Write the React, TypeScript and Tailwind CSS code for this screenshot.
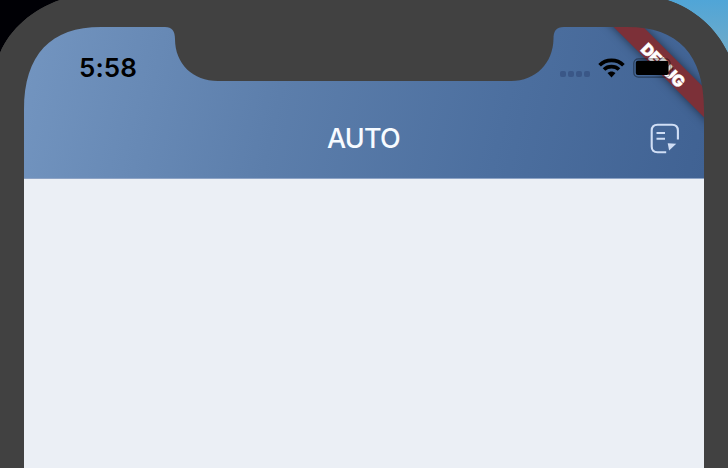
function PhoneFrame() {
  return (
    <svg className="pointer-events-none absolute inset-0" width="728" height="468" viewBox="0 0 728 468" aria-hidden="true">
      <defs>
        <linearGradient id="sky" x1="0" y1="0" x2="0" y2="1">
          <stop offset="0" stopColor="#50a5d7" />
          <stop offset="1" stopColor="#70abc9" />
        </linearGradient>
      </defs>
      <path d="M0 0H60C33 9 10 29 0 53Z" fill="#000005" />
      <path d="M667 0H728V53C716 28 695 9 667 0Z" fill="url(#sky)" />
      <path
        fillRule="evenodd"
        fill="#414141"
        d="M60 0H667C695 9 716 28 728 53V468H0V53C10 29 33 9 60 0Z M24 468V110C24 54 51 27 101 27H165C172 27 175 31 175 39C175 64 193 81 218 81H511C536 81 553 63 553.500 39C553.500 31 556 27 564 27H627C678 27 704 54 704 110V468Z"
      />
    </svg>
  );
}

function Wifi() {
  return (
    <svg width="27" height="20" viewBox="0 0 27 20" fill="none" stroke="#000" strokeWidth="3.700" aria-label="Wi-Fi">
      <path d="M1.600 7.200C8 .8 19 .8 25.400 7.200" />
      <path d="M6 11.500C10 7.600 17 7.600 21 11.500" />
      <path d="M9.500 15.100C11.700 13 15.300 13 17.500 15.100L13.500 19.400Z" fill="#000" stroke="none" />
    </svg>
  );
}

function Battery() {
  return (
    <svg width="41" height="20" viewBox="0 0 41 20" aria-label="Battery">
      <rect x=".8" y=".8" width="36.400" height="18.400" rx="4.500" fill="none" stroke="#000" strokeOpacity=".4" strokeWidth="1.200" />
      <rect x="2.800" y="2.800" width="32.800" height="14.200" rx="2" fill="#000" />
      <path d="M38.500 7Q40.500 8 40.500 10Q40.500 12 38.500 13Z" fill="#000" fillOpacity=".4" />
    </svg>
  );
}

function Note() {
  return (
    <svg width="30" height="31" viewBox="0 0 30 31" fill="none" stroke="#d0def5" strokeWidth="2.100" strokeLinecap="butt" aria-label="Notes">
      <path d="M16.200 29.200H7.500Q1.700 29.200 1.700 23.400V7.500Q1.700 1.700 7.500 1.700H22Q27.900 1.700 27.900 7.500V16.500" />
      <path d="M6.500 10H15M6.500 15.800H15" />
      <path d="M17.700 20.200L26.300 20.800L19.100 27.600Z" fill="#d0def5" stroke="none" />
    </svg>
  );
}

export default function App() {
  return (
    <main className="relative h-[468px] w-[728px] overflow-hidden bg-[#414141] px-[24px] pt-[27px] font-[Inter,sans-serif]">
      <div className="relative flex h-[441px] flex-col overflow-hidden bg-[#ebeff5]">
        <header className="flex h-[152px] shrink-0 flex-col border-b border-[#8da3c5] bg-[linear-gradient(103deg,#7395c0_0%,#5c7eab_38%,#4c6f9f_70%,#406293_100%)]">
          <div className="flex h-[82px] items-center justify-between pl-[55px] pr-[79px]">
            <time className="text-[26px] leading-none font-semibold tracking-[0.1px] text-black">5:58</time>
            <div className="flex items-center">
              <div className="mt-[12px] flex gap-[2px]">
                {[0, 1, 2, 3].map((n) => (
                  <i key={n} className="size-[6px] rounded-[2px] bg-[#3a5787]" />
                ))}
              </div>
              <div className="ml-[8px]"><Wifi /></div>
            </div>
          </div>
          <div className="grid h-[58px] grid-cols-[1fr_auto_1fr] items-center pr-[24px] pl-[23px]">
            <span />
            <h1 className="text-[27px] leading-none font-medium tracking-[-0.8px] text-[#f7fbff]">AUTO</h1>
            <div className="justify-self-end"><Note /></div>
          </div>
        </header>
        <div className="absolute top-[27px] left-[542px] flex h-[21px] w-[200px] rotate-45 items-center justify-center bg-[#7c3038] pt-[4px] pr-[3px] shadow-[0_0_10px_rgba(0,0,0,0.5)]">
          <span className="text-[16px] leading-none font-black tracking-[-0.3px] text-white [-webkit-text-stroke:0.4px_white]">DEBUG</span>
        </div>
        <div className="absolute top-[31px] right-[30px]"><Battery /></div>
      </div>
      <PhoneFrame />
    </main>
  );
}
